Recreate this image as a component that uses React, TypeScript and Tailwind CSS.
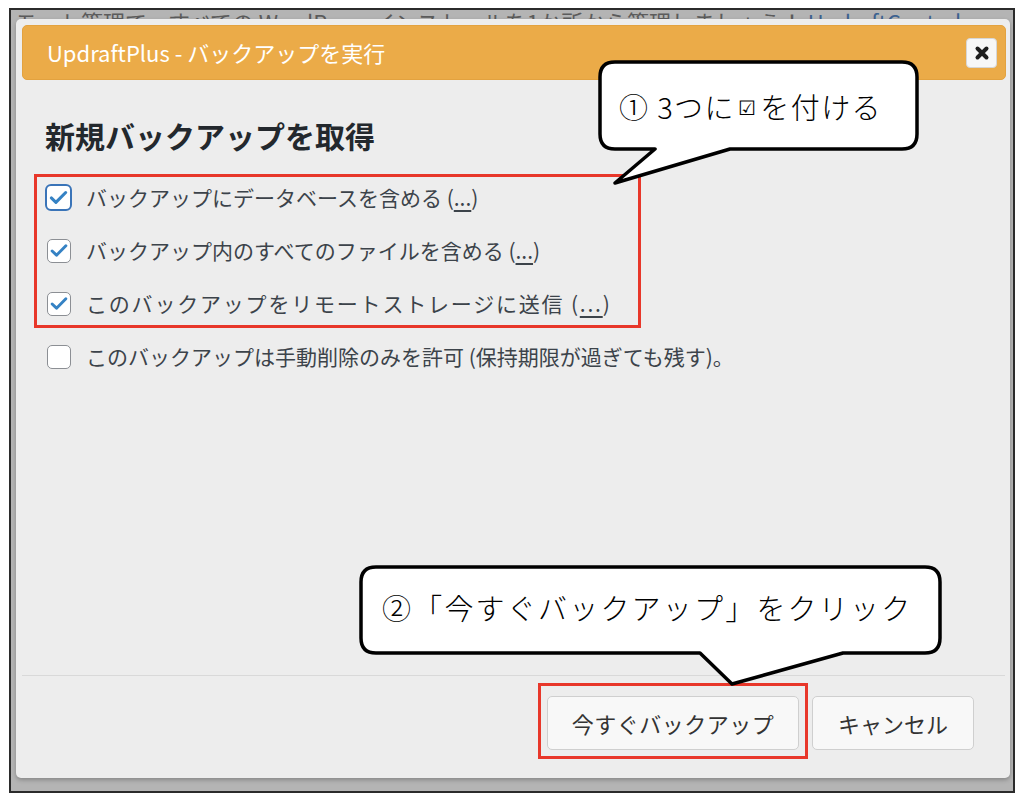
import React from "react";

const jp = { fontFamily: '"Noto Sans CJK JP", "Noto Sans", sans-serif' };

function Check() {
  return (
    <svg viewBox="0 0 24 24" className="w-[23px] h-[23px]" fill="none">
      <path d="M4.5 12.5l4.8 4.6L19.5 6.8" stroke="#3582c4" strokeWidth="3.2" strokeLinecap="round" strokeLinejoin="round" />
    </svg>
  );
}

function Box({ checked, focused }: { checked?: boolean; focused?: boolean }) {
  return (
    <div className="w-[27px] h-[27px] flex items-center justify-center shrink-0">
      {focused ? (
        <div className="w-[27px] h-[27px] rounded-[6px] border-2 border-[#3a74b8] bg-white flex items-center justify-center">
          <Check />
        </div>
      ) : (
        <div className="w-[24px] h-[24px] rounded-[5px] border-[1.5px] border-[#8c8f94] bg-white flex items-center justify-center">
          {checked && <Check />}
        </div>
      )}
    </div>
  );
}

function Row({ label, checked, focused, wide }: { label: string; checked?: boolean; focused?: boolean; wide?: boolean }) {
  return (
    <div className="h-[41px] flex items-center gap-[14px]">
      <Box checked={checked} focused={focused} />
      <span className={`text-[21px] text-[#3c434a] whitespace-nowrap ${wide ? "tracking-[1.8px]" : ""}`}>
        {label} (<span className="underline underline-offset-4">...</span>)
      </span>
    </div>
  );
}

export default function App() {
  return (
    <div className="relative w-[1024px] h-[800px] bg-white pl-[9px] pt-[8px]" style={jp}>
      {/* screenshot frame */}
      <div className="w-[1006px] h-[785px] border-2 border-[#2b2b2b] bg-[#b4b4b4] flex flex-col overflow-hidden">
        {/* page behind the overlay */}
        <div className="h-[9px] overflow-hidden pl-[4px] shrink-0">
          <p className="text-[22px] leading-[20px] mt-[1px] text-[#5c5c5c] whitespace-nowrap">
            モート管理で、すべての WordPress インストールを1か所から管理しましょう！ <span className="text-[#3d6290]">UpdraftCentral</span>
          </p>
        </div>

        {/* dialog */}
        <div className="ml-[5px] mr-[3px] h-[759px] bg-[#ededed] rounded-[5px] shadow-[0_2px_4px_rgba(0,0,0,0.25)] flex flex-col pt-[6px] shrink-0">
          {/* title bar */}
          <div className="ml-[6px] mr-[4px] h-[55px] bg-[#ebab48] border border-[#e3a23f] rounded-[5px] flex items-center justify-between pl-[24px] pr-[8px]">
            <span className="text-[22px] text-white">UpdraftPlus - バックアップを実行</span>
            <button className="w-[31px] h-[30px] bg-[#f7f7f7] border border-[#d6d6d6] rounded-[4px] flex items-center justify-center">
              <svg viewBox="0 0 16 16" className="w-[16px] h-[16px]">
                <path d="M3.5 3.5l9 9M12.5 3.5l-9 9" stroke="#1e1e1e" strokeWidth="4" strokeLinecap="round" />
              </svg>
            </button>
          </div>

          {/* content */}
          <div className="flex-1 flex flex-col pl-[18px]">
            <h1 className="ml-[11px] mt-[38px] text-[30px] leading-[35px] font-bold text-[#23282d]">新規バックアップを取得</h1>

            <div className="mt-[21px] w-[607px] border-[3px] border-[#e8372a] pl-[8px] pb-[1px] flex flex-col gap-[12px]">
              <Row label="バックアップにデータベースを含める" checked focused />
              <Row label="バックアップ内のすべてのファイルを含める" checked />
              <Row label="このバックアップをリモートストレージに送信" checked wide />
            </div>

            <div className="mt-[8px] ml-[11px] h-[41px] flex items-center gap-[14px]">
              <Box />
              <span className="text-[21px] text-[#3c434a] whitespace-nowrap">
                このバックアップは手動削除のみを許可 (保持期限が過ぎても残す)。
              </span>
            </div>
          </div>

          {/* footer */}
          <div className="ml-[6px] mr-[5px] h-px bg-[#d9d9d9]" />
          <div className="flex justify-end items-start gap-[4px] pt-[7px] pb-[19px] pr-[36px]">
            <div className="border-[3px] border-[#e8372a] pt-[10px] pb-[6px] px-[6px]">
              <button className="w-[252px] h-[54px] bg-[#f8f8f8] border border-[#cfcfcf] rounded-[5px] text-[22px] tracking-[0.5px] text-[#333]">
                今すぐバックアップ
              </button>
            </div>
            <button className="mt-[13px] w-[162px] h-[54px] bg-[#f8f8f8] border border-[#cfcfcf] rounded-[5px] text-[22px] text-[#333]">
              キャンセル
            </button>
          </div>
        </div>
      </div>

      {/* annotation callouts */}
      <svg className="absolute left-0 top-0 w-[1024px] h-[800px] pointer-events-none" viewBox="0 0 1024 800">
        <path
          d="M615 62 H902 Q917 62 917 77 V134 Q917 149 902 149 H730 L615 183 L655 149 H615 Q600 149 600 134 V77 Q600 62 615 62 Z"
          fill="white"
          stroke="black"
          strokeWidth="3.5"
          strokeLinejoin="round"
        />
        <path
          d="M376 567 H925 Q940 567 940 582 V638 Q940 653 925 653 H843 L732 684 L700 653 H376 Q361 653 361 638 V582 Q361 567 376 567 Z"
          fill="white"
          stroke="black"
          strokeWidth="3.5"
          strokeLinejoin="round"
        />
      </svg>
      <div className="absolute left-[619px] top-[88px] h-[38px] flex items-center text-[29px] font-light tracking-[1.4px] text-black whitespace-nowrap">
        ① 3つに<span className="text-[20px] mx-[3px]">☑</span>を付ける
      </div>
      <div className="absolute left-[382px] top-[589px] h-[38px] flex items-center text-[29px] font-light tracking-[2.2px] text-black whitespace-nowrap">
        ②「今すぐバックアップ」をクリック
      </div>
    </div>
  );
}
